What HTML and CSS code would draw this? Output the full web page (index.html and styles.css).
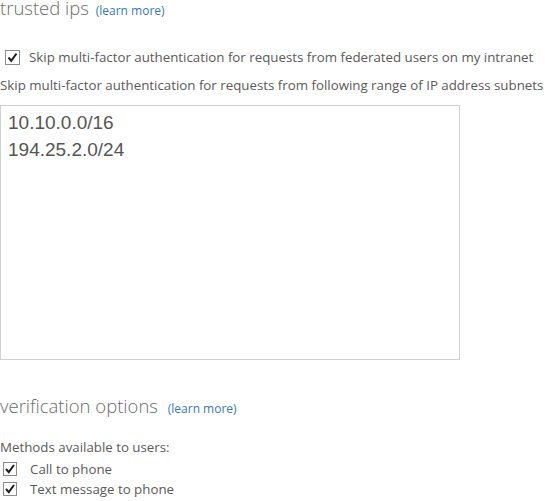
FILE: index.html
```html
<!DOCTYPE html>
<html>
<head>
<meta charset="utf-8">
<link rel="stylesheet" href="styles.css">
</head>
<body>
<div class="page">
  <section class="section">
    <h2 class="heading">trusted ips <a class="learn" href="#">(learn more)</a></h2>
    <label class="check-row first">
      <span class="box big"><svg width="15" height="15" viewBox="0 0 15 15"><rect x="0.5" y="0.5" width="14" height="14" fill="#fff" stroke="#8c8c8c"/><path d="M3.5 7.5 L6.2 10.8 L11.5 3.5" fill="none" stroke="#1e1e1e" stroke-width="2"/></svg></span>
      <span class="label">Skip multi-factor authentication for requests from federated users on my intranet</span>
    </label>
    <p class="desc">Skip multi-factor authentication for requests from following range of IP address subnets</p>
    <div class="ipbox">10.10.0.0/16<br>194.25.2.0/24</div>
  </section>
  <section class="section second">
    <h2 class="heading">verification options <a class="learn wide" href="#">(learn more)</a></h2>
    <p class="methods">Methods available to users:</p>
    <label class="check-row small">
      <span class="box"><svg width="14" height="14" viewBox="0 0 14 14"><rect x="0.5" y="0.5" width="13" height="13" fill="#fff" stroke="#8c8c8c"/><path d="M3 7 L5.8 10.2 L11 3" fill="none" stroke="#1e1e1e" stroke-width="2"/></svg></span>
      <span class="label">Call to phone</span>
    </label>
    <label class="check-row small">
      <span class="box"><svg width="14" height="14" viewBox="0 0 14 14"><rect x="0.5" y="0.5" width="13" height="13" fill="#fff" stroke="#8c8c8c"/><path d="M3 7 L5.8 10.2 L11 3" fill="none" stroke="#1e1e1e" stroke-width="2"/></svg></span>
      <span class="label">Text message to phone</span>
    </label>
  </section>
</div>
</body>
</html>
```
FILE: styles.css
```css
html, body {
  margin: 0;
  padding: 0;
  background: #fff;
}
.page {
  font-family: "Open Sans", "Noto Sans", sans-serif;
  color: #5a5a5a;
  width: 545px;
  font-size: 13.3px;
}
.heading {
  margin: 0;
  font-size: 18.5px;
  font-weight: 300;
  color: #6b6b6b;
  line-height: 15px;
}
.learn {
  font-size: 12px;
  color: #3479bd;
  text-decoration: none;
  font-weight: 400;
  margin-left: 2px;
}
.learn.wide {
  margin-left: 5px;
}
.check-row {
  display: flex;
  align-items: center;
  line-height: 18px;
}
.check-row.first {
  margin-top: 30px;
  padding-left: 5px;
  gap: 9px;
}
.box {
  display: flex;
  flex: none;
}
.desc {
  margin: 10px 0 0 0;
  line-height: 18px;
}
.ipbox {
  margin-top: 11px;
  box-sizing: border-box;
  width: 460px;
  height: 255px;
  border: 1px solid #cdd2d8;
  padding: 3px 0 0 7px;
  font-family: "Liberation Sans", Arial, sans-serif;
  font-size: 19px;
  line-height: 27px;
  color: #555;
}
.second {
  margin-top: 38px;
}
.methods {
  margin: 22px 0 0 0;
  line-height: 18px;
}
.check-row.small {
  padding-left: 3px;
  gap: 13px;
  margin-top: 2px;
}
.check-row.small:first-of-type {
  margin-top: 4px;
}
```
